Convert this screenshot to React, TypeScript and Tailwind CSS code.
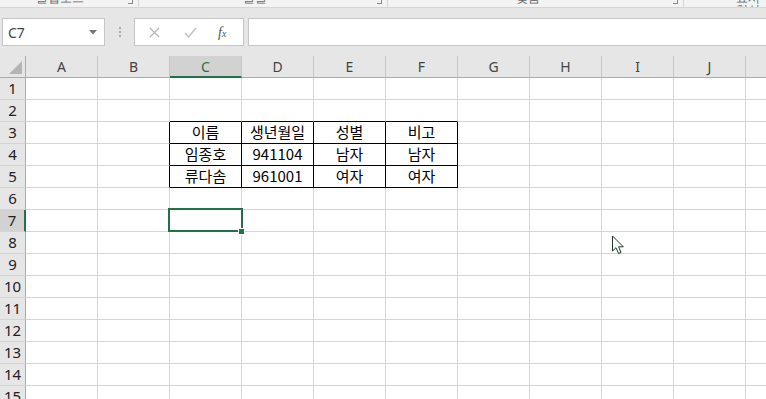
import React from "react";

const COLS = ["A", "B", "C", "D", "E", "F", "G", "H", "I", "J", "K"];
const ROWS = Array.from({ length: 15 }, (_, i) => i + 1);

// table data in C3:F5
const TABLE: Record<string, string> = {
  C3: "이름",
  D3: "생년월일",
  E3: "성별",
  F3: "비고",
  C4: "임종호",
  D4: "941104",
  E4: "남자",
  F4: "남자",
  C5: "류다솜",
  D5: "961001",
  E5: "여자",
  F5: "여자",
};

const inTable = (c: number, r: number) => c >= 2 && c <= 5 && r >= 3 && r <= 5;

const font = { fontFamily: '"Noto Sans", "Noto Sans CJK KR", sans-serif' };

function Ribbon() {
  return (
    <div className="flex h-[8px] overflow-hidden border-b border-[#d5d5d5] bg-[#f3f3f3] text-[12px] leading-[12px] text-[#666]">
      <div className="relative flex w-[139px] border-r border-[#d5d5d5]">
        <span className="ml-[36px] -mt-[8px]">클립보드</span>
        <span className="absolute right-[5px] top-0 h-[4px] w-[5px] border-r border-b border-[#888]" />
      </div>
      <div className="relative flex w-[249px] border-r border-[#d5d5d5]">
        <span className="ml-[104px] -mt-[8px]">글꼴</span>
        <span className="absolute right-[5px] top-0 h-[4px] w-[5px] border-r border-b border-[#888]" />
      </div>
      <div className="relative flex w-[296px] border-r border-[#d5d5d5]">
        <span className="ml-[128px] -mt-[8px]">맞춤</span>
        <span className="absolute right-[5px] top-0 h-[4px] w-[5px] border-r border-b border-[#888]" />
      </div>
      <div className="flex flex-1">
        <span className="ml-[52px] -mt-[8px]">표시 형식</span>
      </div>
    </div>
  );
}

function FormulaBar() {
  return (
    <div className="flex h-[48px] items-start bg-[#e6e6e6] pt-[10px]">
      <div className="ml-[2px] flex h-[28px] w-[103px] items-center justify-between border border-[#c6c6c6] bg-white pl-[5px] pr-[7px]">
        <span className="text-[14px] text-[#444]" style={font}>C7</span>
        <svg width="8" height="5" viewBox="0 0 8 5">
          <path d="M0 0 L8 0 L4 4.5 Z" fill="#777" />
        </svg>
      </div>
      <div className="flex w-[29px] flex-col items-center justify-center gap-[2px] self-stretch pb-[10px]">
        <span className="h-[2px] w-[2px] bg-[#aaa]" />
        <span className="h-[2px] w-[2px] bg-[#aaa]" />
        <span className="h-[2px] w-[2px] bg-[#aaa]" />
      </div>
      <div className="flex h-[28px] w-[110px] items-center border border-[#c6c6c6] bg-white">
        <svg className="ml-[14px]" width="11" height="11" viewBox="0 0 11 11">
          <path d="M1 1 L10 10 M10 1 L1 10" stroke="#b4b4b4" strokeWidth="1.2" />
        </svg>
        <svg className="ml-[24px]" width="13" height="11" viewBox="0 0 13 11">
          <path d="M1 6 L4.5 10 L12 1" stroke="#c4c4c4" strokeWidth="1.6" fill="none" />
        </svg>
        <span
          className="ml-[21px] text-[14px] italic text-[#555]"
          style={{ fontFamily: '"Liberation Serif", serif' }}
        >
          f<span className="text-[10px]">x</span>
        </span>
      </div>
      <div className="ml-[4px] h-[28px] flex-1 border border-r-0 border-[#c6c6c6] bg-white" />
    </div>
  );
}

function Grid() {
  return (
    <div className="relative" style={font}>
      {/* column headers */}
      <div className="flex h-[22px] bg-[#e6e6e6]">
        <div className="relative w-[26px] shrink-0 border-r border-b border-[#ababab]">
          <svg className="absolute bottom-[3px] right-[3px]" width="13" height="13" viewBox="0 0 13 13">
            <path d="M13 0 L13 13 L0 13 Z" fill="#b4b4b4" />
          </svg>
        </div>
        {COLS.map((c) => (
          <div
            key={c}
            className={
              c === "C"
                ? "flex w-[72px] shrink-0 items-center justify-center border-r border-b-2 border-r-[#c6c6c6] border-b-[#217346] bg-[#d2d2d2] text-[14px] text-[#217346]"
                : "flex w-[72px] shrink-0 items-center justify-center border-r border-b border-r-[#c6c6c6] border-b-[#ababab] text-[14px] text-[#444]"
            }
          >
            {c}
          </div>
        ))}
      </div>
      {/* rows */}
      {ROWS.map((r) => (
        <div key={r} className="flex h-[22px]">
          <div
            className={
              r === 7
                ? "flex w-[26px] shrink-0 items-center justify-center border-r-2 border-b border-r-[#217346] border-b-[#d4d4d4] bg-[#d2d2d2] text-[15px] text-[#222]"
                : "flex w-[26px] shrink-0 items-center justify-center border-r border-b border-r-[#ababab] border-b-[#d4d4d4] bg-[#e6e6e6] text-[15px] text-[#222]"
            }
          >
            {r}
          </div>
          {COLS.map((c, ci) => {
            const key = `${c}${r}`;
            const right = inTable(ci, r) || inTable(ci + 1, r);
            const bottom = inTable(ci, r) || inTable(ci, r + 1);
            return (
              <div
                key={key}
                className={`flex w-[72px] shrink-0 items-center justify-center border-r border-b bg-white text-[15px] text-black ${
                  right ? "border-r-black" : "border-r-[#d4d4d4]"
                } ${bottom ? "border-b-black" : "border-b-[#d4d4d4]"}`}
                style={{ fontFamily: '"Noto Sans CJK KR", "Noto Sans", sans-serif' }}
              >
                {TABLE[key] ?? ""}
              </div>
            );
          })}
        </div>
      ))}

      {/* active cell C7 */}
      <div className="absolute left-[168px] top-[152px] h-[24px] w-[75px] border-2 border-[#217346]" />
      <div className="absolute left-[238px] top-[172px] h-[7px] w-[7px] border border-white bg-[#217346]" />

      {/* mouse cursor */}
      <svg className="absolute left-[611px] top-[179px]" width="14" height="21" viewBox="0 0 14 21">
        <path
          d="M1.5 1 L1.5 16 L5 12.7 L7.6 18.5 L10 17.4 L7.6 11.8 L12.3 11.8 Z"
          fill="white"
          stroke="#1f3a2a"
          strokeWidth="1"
          strokeLinejoin="round"
        />
      </svg>
    </div>
  );
}

export default function App() {
  return (
    <div className="h-[399px] w-[766px] overflow-hidden bg-white">
      <Ribbon />
      <FormulaBar />
      <Grid />
    </div>
  );
}
